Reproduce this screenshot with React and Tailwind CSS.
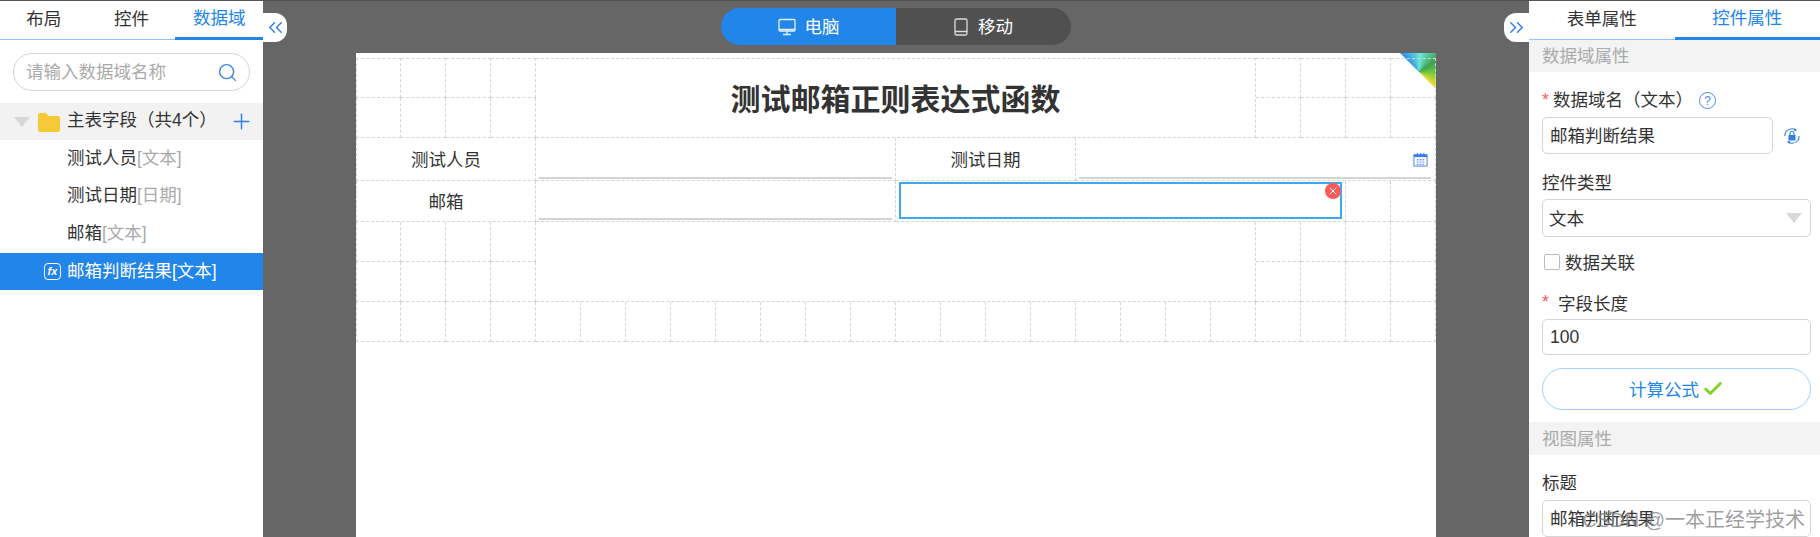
import { Check, ChevronsLeft, ChevronsRight, Plus, Search, X } from "lucide-react";

const leftTabs = ["布局", "控件", "数据域"];
const rightTabs = ["表单属性", "控件属性"];

const fields = [
  { name: "测试人员", type: "[文本]" },
  { name: "测试日期", type: "[日期]" },
  { name: "邮箱", type: "[文本]" },
];

const cellBase = "border-r border-b border-dashed border-[#d4d4d4] relative";

const Tabs = ({ tabs, active }) => (
  <div className="flex h-[39px] border-b border-[#8cc5ff] shrink-0">
    {tabs.map((t, i) => (
      <div
        key={t}
        className={
          i === active
            ? "flex-1 h-[39px] flex items-center justify-center pb-[1px] text-[#2185ea] border-b-[3px] border-[#2185ea]"
            : "flex-1 h-[38px] flex items-center justify-center pb-[2px] text-[#333]"
        }
      >
        {t}
      </div>
    ))}
  </div>
);

const Triangle = ({ className = "" }) => (
  <div
    className={`w-0 h-0 border-l-[8px] border-r-[8px] border-t-[10px] border-l-transparent border-r-transparent border-t-[#d8d8d8] ${className}`}
  ></div>
);

const Blank = ({ className = "" }) => <div className={`${cellBase} ${className}`}></div>;

const LabelCell = ({ children, className = "" }) => (
  <div className={`${cellBase} col-span-4 flex items-center justify-center pt-[2px] text-[#333] ${className}`}>
    {children}
  </div>
);

const InputCell = ({ className = "", children }) => (
  <div className={`${cellBase} col-span-8 px-[3px] pb-[2px] flex items-end ${className}`}>
    <div className="w-full border-b-2 border-[#d4d4d4] -mb-[1px]"></div>
    {children}
  </div>
);

const CalendarIcon = () => (
  <svg viewBox="0 0 16 16" className="w-[15px] h-[17px] absolute right-[7px] top-[13px]" fill="none">
    <rect x="1" y="3" width="14" height="12" stroke="#3d7fee" strokeWidth="1" />
    <rect x="1" y="2.5" width="14" height="3" fill="#3d7fee" />
    <path d="M4.5 1v3M8 1v3M11.5 1v3" stroke="#3d7fee" strokeWidth="1.2" />
    <path
      d="M4 7.5h2v1.5H4zM7 7.5h2v1.5H7zM10 7.5h2v1.5h-2zM4 10h2v1.5H4zM7 10h2v1.5H7zM10 10h2v1.5h-2zM4 12.5h2V14H4zM7 12.5h2V14H7zM10 12.5h2V14h-2z"
      fill="#7ea6f2"
    />
  </svg>
);

const FormCanvas = () => (
  <div className="relative w-[1080px] flex-1 bg-white pt-[5px]">
    <div className="absolute top-0 right-0 w-[36px] h-[36px] bg-[conic-gradient(from_-45deg_at_52%_54%,#2f8fe8,#6be8d8_50deg,#3f9f4f_100deg,#5cc040_125deg,#f2e030_180deg,#f2e030_360deg)] [clip-path:polygon(0_0,100%_0,100%_100%)]"></div>
    <div className="grid grid-cols-[repeat(24,45px)] grid-rows-[40px_40px_43px_41px_40px_40px_40px]">
      {/* row 1 and 2 with title */}
      <Blank className="border-t border-l" />
      <Blank className="border-t" />
      <Blank className="border-t" />
      <Blank className="border-t" />
      <div className={`${cellBase} border-t col-span-16 row-span-2 flex items-center justify-center pt-[2px] text-[30px] font-bold text-[#333]`}>
        测试邮箱正则表达式函数
      </div>
      <Blank className="border-t" />
      <Blank className="border-t" />
      <Blank className="border-t" />
      <Blank className="border-t" />
      <Blank className="border-l" />
      <Blank />
      <Blank />
      <Blank />
      <Blank />
      <Blank />
      <Blank />
      <Blank />

      {/* row 3 */}
      <LabelCell className="border-l">测试人员</LabelCell>
      <InputCell />
      <LabelCell>测试日期</LabelCell>
      <InputCell className="pr-[4px]">
        <CalendarIcon />
      </InputCell>

      {/* row 4 */}
      <LabelCell className="border-l">邮箱</LabelCell>
      <InputCell />
      <div className={`${cellBase} col-span-10 pl-[3px] pr-[3px] pt-[1px] pb-[2px]`}>
        <div className="relative h-[37px] border-2 border-[#3aa9f0]">
          <div className="absolute -top-[1px] -right-[1px] w-[16px] h-[16px] rounded-full bg-[#f95a5a] flex items-center justify-center">
            <X size={12} color="white" strokeWidth={2} />
          </div>
        </div>
      </div>
      <Blank />
      <Blank />

      {/* row 5 and 6 */}
      <Blank className="border-l" />
      <Blank />
      <Blank />
      <Blank />
      <div className={`${cellBase} col-span-16 row-span-2`}></div>
      <Blank />
      <Blank />
      <Blank />
      <Blank />
      <Blank className="border-l" />
      <Blank />
      <Blank />
      <Blank />
      <Blank />
      <Blank />
      <Blank />
      <Blank />

      {/* row 7 */}
      {Array.from({ length: 24 }).map((_, i) => (
        <Blank key={i} className={i === 0 ? "border-l" : ""} />
      ))}
    </div>
  </div>
);

const LeftPanel = () => (
  <div className="w-[263px] shrink-0 bg-white flex flex-col">
    <Tabs tabs={leftTabs} active={2} />
    <div className="mt-[13px] mx-[13px] h-[38px] border border-[#d5d5d5] rounded-full flex items-center justify-between pl-[12px] pr-[11px]">
      <span className="text-[#aaa]">请输入数据域名称</span>
      <Search size={21} color="#3d86e8" strokeWidth={1.6} />
    </div>
    <div className="mt-[12px] h-[37px] bg-[#f2f2f2] flex items-center pl-[14px] pr-[9px]">
      <Triangle />
      <svg viewBox="0 0 24 20" className="w-[24px] h-[20px] ml-[7px]">
        <path d="M1 3a2 2 0 0 1 2-2h6l3 3h9a2 2 0 0 1 2 2v12a2 2 0 0 1-2 2H3a2 2 0 0 1-2-2z" fill="#f6c936" />
      </svg>
      <span className="ml-[6px] pb-[2px] text-[#333] flex-1">主表字段（共4个）</span>
      <Plus size={25} color="#2f7fe8" strokeWidth={1.4} />
    </div>
    {fields.map((f) => (
      <div key={f.name} className="h-[37.5px] flex items-center pl-[67px] pb-[2px]">
        <span className="text-[#333]">{f.name}</span>
        <span className="text-[#aaa]">{f.type}</span>
      </div>
    ))}
    <div className="h-[37.5px] bg-[#2185ea] text-white flex items-center pl-[44px]">
      <span className="w-[17px] h-[17px] border border-white rounded-[4px] flex items-center justify-center text-[11px] font-bold italic leading-none shrink-0">
        fx
      </span>
      <span className="ml-[6px]">邮箱判断结果[文本]</span>
    </div>
  </div>
);

const RightPanel = () => (
  <div className="relative w-[291px] shrink-0 bg-white flex flex-col text-[#333]">
    <Tabs tabs={rightTabs} active={1} />
    <div className="h-[32px] bg-[#f3f3f3] flex items-center pl-[13px] text-[#aaa] shrink-0">数据域属性</div>

    <div className="mt-[16px] h-[24px] pl-[13px] pt-[1px] flex items-center">
      <span className="text-[#f95a5a] w-[11px] leading-none">*</span>
      <span>数据域名（文本）</span>
      <span className="ml-[6px] w-[17px] h-[17px] rounded-full border border-[#4a8be8] text-[#4a8be8] text-[12px] flex items-center justify-center">
        ?
      </span>
    </div>
    <div className="mt-[5px] pl-[13px] flex items-center">
      <div className="w-[231px] h-[37px] border border-[#d5d5d5] rounded-[5px] flex items-center pl-[7px] pt-[2px] shrink-0">
        邮箱判断结果
      </div>
      <svg viewBox="0 0 18 18" className="w-[18px] h-[18px] ml-[10px]" fill="none">
        <path d="M3 4.5a8 8 0 0 1 10-1.5M15 13.5a8 8 0 0 1-10 1.5M2 9a7 7 0 0 1 1-4.5M16 9a7 7 0 0 1-1 4.5" stroke="#2f7fe8" strokeWidth="1.1" />
        <path d="M11.5 1.2 14 3.4l-3 .8zM6.5 16.8 4 14.6l3-.8z" fill="#2f7fe8" />
        <rect x="5.5" y="8" width="7" height="5.5" rx="0.5" fill="#2f7fe8" />
        <path d="M7 8V6.5a2 2 0 0 1 4 0V8" stroke="#2f7fe8" strokeWidth="1.1" />
      </svg>
    </div>

    <div className="mt-[16px] h-[24px] pl-[13px] pt-[2px] flex items-center">控件类型</div>
    <div className="mt-[5px] ml-[13px] mr-[9px] h-[38px] border border-[#d5d5d5] rounded-[5px] flex items-center justify-between pl-[6px] pr-[8px]">
      <span className="pt-[3px]">文本</span>
      <Triangle />
    </div>

    <div className="mt-[13px] h-[24px] pl-[15px] flex items-center">
      <span className="w-[16px] h-[16px] border border-[#bbb] rounded-[2px]"></span>
      <span className="ml-[5px] pt-[2px]">数据关联</span>
    </div>

    <div className="mt-[17px] h-[24px] pl-[13px] flex items-center">
      <span className="text-[#f95a5a] w-[16px] leading-none">*</span>
      <span className="pt-[2px]">字段长度</span>
    </div>
    <div className="mt-[4px] ml-[13px] mr-[9px] h-[37px] border border-[#d5d5d5] rounded-[5px] flex items-center pl-[7px]">100</div>

    <div className="mt-[13px] ml-[13px] mr-[9px] h-[42px] border border-[#a4d1ff] rounded-full flex items-center justify-center text-[#2185ea]">
      <span className="pt-[1px]">计算公式</span>
      <Check size={22} color="#7ed321" strokeWidth={3} className="ml-[3px]" />
    </div>

    <div className="mt-[12px] h-[33px] bg-[#f3f3f3] flex items-center pl-[13px] pt-[2px] text-[#aaa] shrink-0">视图属性</div>

    <div className="mt-[15px] h-[24px] pl-[13px] pt-[2px] flex items-center">标题</div>
    <div className="mt-[6px] ml-[13px] mr-[9px] h-[37px] border border-[#d5d5d5] rounded-[5px] flex items-center pl-[7px] pt-[2px] shrink-0">
      邮箱判断结果
    </div>

    <div className="absolute right-[15px] bottom-[7px] text-[20px] leading-none text-[#808080]/75 whitespace-nowrap">
      CSDN @一本正经学技术
    </div>
  </div>
);

const App = () => {
  return (
    <div className="w-[1820px] h-[537px] overflow-hidden flex border-t border-[#555] text-[17.5px] font-['Liberation_Sans','Noto_Sans_CJK_SC',sans-serif]">
      <LeftPanel />
      <div className="relative flex-1 bg-[#666666] flex flex-col items-center pt-[7px]">
        <div className="absolute left-0 top-[12px] w-[24px] h-[29px] bg-white rounded-r-[12px] flex items-center justify-center">
          <ChevronsLeft size={23} color="#2f7fe8" strokeWidth={1.5} />
        </div>
        <div className="absolute right-0 top-[12px] w-[25px] h-[29px] bg-white rounded-l-[12px] flex items-center justify-center">
          <ChevronsRight size={23} color="#2f7fe8" strokeWidth={1.5} />
        </div>

        <div className="flex w-[350px] h-[37px] rounded-full overflow-hidden text-white shrink-0">
          <div className="w-[175px] bg-[#2185ea] flex items-center justify-center">
            <svg viewBox="0 0 18 18" className="w-[18px] h-[18px]" fill="none" stroke="#e4f1ff" strokeWidth="1.3">
              <rect x="1" y="1.5" width="16" height="11.5" rx="1" />
              <path d="M1 11.5h16M9 13v3M5 16.5h8" />
            </svg>
            <span className="ml-[9px] pt-[1px]">电脑</span>
          </div>
          <div className="w-[175px] bg-[#505050] flex items-center justify-center">
            <svg viewBox="0 0 14 18" className="w-[14px] h-[18px]" fill="none" stroke="#dcdcdc" strokeWidth="1.3">
              <rect x="1" y="1" width="12" height="16" rx="1.5" />
              <path d="M1 13.5h12" />
            </svg>
            <span className="ml-[10px] pt-[1px]">移动</span>
          </div>
        </div>

        <div className="mt-[8px] flex-1 flex flex-col">
          <FormCanvas />
        </div>
      </div>
      <RightPanel />
    </div>
  );
};

export default App;
